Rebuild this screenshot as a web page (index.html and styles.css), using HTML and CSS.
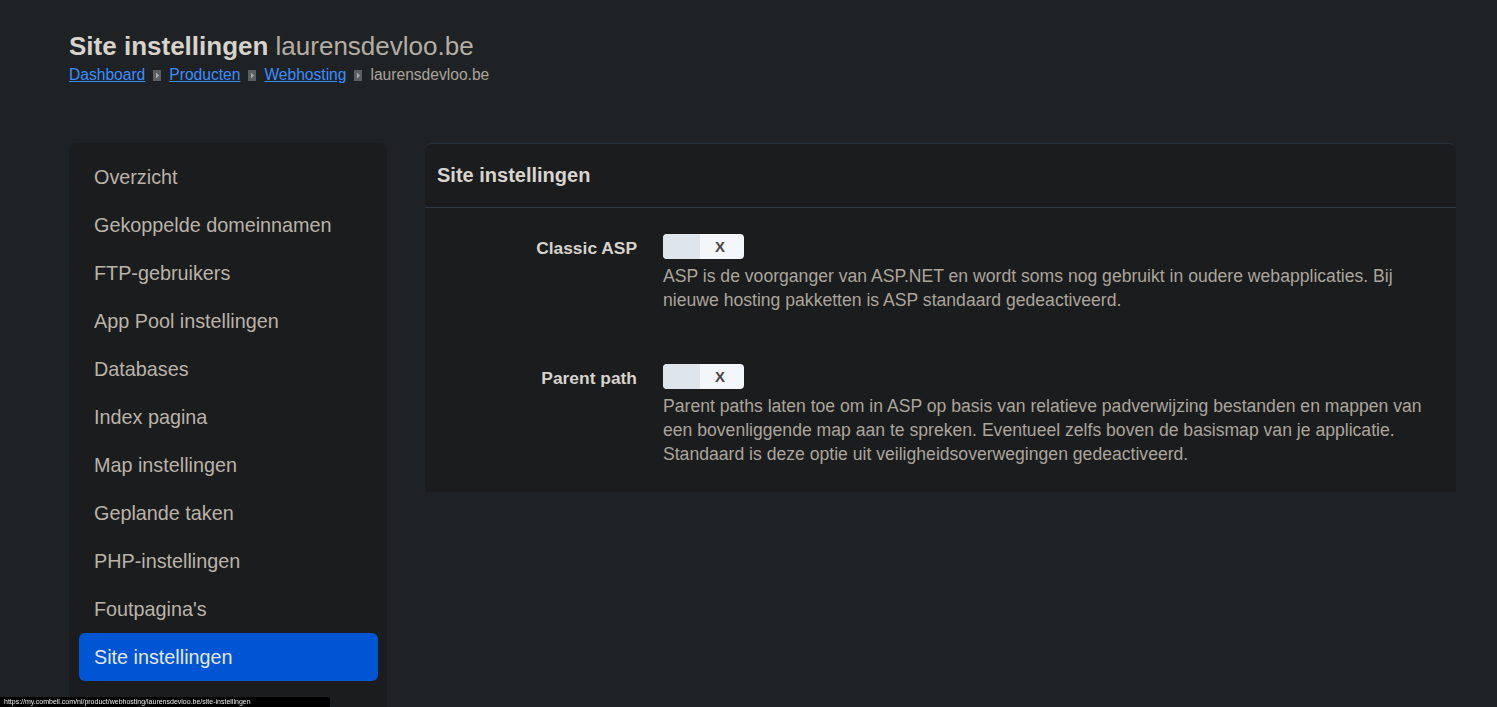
FILE: index.html
```html
<!DOCTYPE html>
<html lang="nl">
<head>
<meta charset="utf-8">
<title>Site instellingen</title>
<link rel="stylesheet" href="styles.css">
</head>
<body>
<div class="page">
  <header class="page-header">
    <h1 class="title">Site instellingen <span class="title-domain">laurensdevloo.be</span></h1>
    <nav class="crumbs">
      <a href="#">Dashboard</a>
      <svg class="sep" width="8" height="11" viewBox="0 0 8 11"><rect width="8" height="11" fill="#5c5f62"/><path d="M3 2.5 L6 5.5 L3 8.5 Z" fill="#a9acaf"/></svg>
      <a href="#">Producten</a>
      <svg class="sep" width="8" height="11" viewBox="0 0 8 11"><rect width="8" height="11" fill="#5c5f62"/><path d="M3 2.5 L6 5.5 L3 8.5 Z" fill="#a9acaf"/></svg>
      <a href="#">Webhosting</a>
      <svg class="sep" width="8" height="11" viewBox="0 0 8 11"><rect width="8" height="11" fill="#5c5f62"/><path d="M3 2.5 L6 5.5 L3 8.5 Z" fill="#a9acaf"/></svg>
      <span class="crumb-current">laurensdevloo.be</span>
    </nav>
  </header>

  <div class="layout">
    <aside class="sidebar">
      <a class="nav-item" href="#">Overzicht</a>
      <a class="nav-item" href="#">Gekoppelde domeinnamen</a>
      <a class="nav-item" href="#">FTP-gebruikers</a>
      <a class="nav-item" href="#">App Pool instellingen</a>
      <a class="nav-item" href="#">Databases</a>
      <a class="nav-item" href="#">Index pagina</a>
      <a class="nav-item" href="#">Map instellingen</a>
      <a class="nav-item" href="#">Geplande taken</a>
      <a class="nav-item" href="#">PHP-instellingen</a>
      <a class="nav-item" href="#">Foutpagina's</a>
      <a class="nav-item active" href="#">Site instellingen</a>
    </aside>

    <section class="card">
      <div class="card-header">Site instellingen</div>
      <div class="card-body">
        <div class="setting">
          <div class="setting-label">Classic ASP</div>
          <div class="setting-control">
            <div class="toggle"><span class="toggle-knob"></span><span class="toggle-x">X</span></div>
            <p class="setting-desc">ASP is de voorganger van ASP.NET en wordt soms nog gebruikt in oudere webapplicaties. Bij nieuwe hosting pakketten is ASP standaard gedeactiveerd.</p>
          </div>
        </div>
        <div class="setting">
          <div class="setting-label">Parent path</div>
          <div class="setting-control">
            <div class="toggle"><span class="toggle-knob"></span><span class="toggle-x">X</span></div>
            <p class="setting-desc">Parent paths laten toe om in ASP op basis van relatieve padverwijzing bestanden en mappen van een bovenliggende map aan te spreken. Eventueel zelfs boven de basismap van je applicatie. Standaard is deze optie uit veiligheidsoverwegingen gedeactiveerd.</p>
          </div>
        </div>
      </div>
    </section>
  </div>
</div>
<div class="statusbar"><span>https://my.combell.com/nl/product/webhosting/laurensdevloo.be/site-instellingen</span></div>
</body>
</html>
```

FILE: styles.css
```css
* { box-sizing: border-box; }
html, body { margin: 0; padding: 0; }
body {
  background: #1f2224;
  font-family: "Liberation Sans", Arial, sans-serif;
  color: #b9b3a9;
  height: 707px;
  overflow: hidden;
}
.page {
  padding: 29px 41px 0 69px;
}
.page-header { height: 114px; }
.title {
  margin: 0;
  font-size: 26px;
  line-height: 34px;
  font-weight: bold;
  color: #d6d2cc;
}
.title-domain { font-weight: normal; color: #b4aea5; }
.crumbs {
  display: flex;
  align-items: center;
  gap: 7px;
  font-size: 15.6px;
  line-height: 22px;
  margin-top: 1px;
}
.crumbs a { color: #3a8eff; text-decoration: underline; }
.crumbs .sep { margin: 0 1px; }
.crumb-current { color: #aaa49b; }

.layout {
  display: flex;
  gap: 38px;
  align-items: flex-start;
}
.sidebar {
  width: 318px;
  flex: none;
  background: #1b1c1e;
  border-radius: 7px;
  padding: 10px 9px 60px 10px;
  display: flex;
  flex-direction: column;
}
.nav-item {
  display: block;
  height: 48px;
  line-height: 48px;
  padding-left: 15px;
  font-size: 19.8px;
  color: #bab3a8;
  text-decoration: none;
  border-radius: 6px;
}
.nav-item.active {
  background: #0055d2;
  color: #e3e7ee;
}
.card {
  flex: 1;
  background: #1b1c1e;
  border-top: 1px solid #26313b;
  border-radius: 7px 7px 0 0;
}
.card-header {
  height: 64px;
  line-height: 63px;
  padding-left: 12px;
  font-size: 20px;
  font-weight: bold;
  color: #d8d4ce;
  border-bottom: 1px solid #2b3844;
}
.card-body {
  padding: 26px 0 26px;
  display: flex;
  flex-direction: column;
  gap: 52px;
}
.setting { display: flex; }
.setting-label {
  width: 212px;
  flex: none;
  text-align: right;
  font-size: 17.4px;
  font-weight: bold;
  color: #d6d2cc;
  padding-top: 4px;
}
.setting-control { padding-left: 26px; padding-right: 30px; }
.toggle {
  width: 81px;
  height: 25px;
  border-radius: 4px;
  background: #f3f6fa;
  display: flex;
  align-items: center;
  overflow: hidden;
}
.toggle-knob {
  width: 37px;
  height: 25px;
  background: #dfe5ec;
  border-radius: 4px 0 0 4px;
}
.toggle-x {
  flex: 1;
  text-align: center;
  font-size: 15px;
  font-weight: bold;
  color: #4a4744;
  padding-right: 4px;
}
.setting-desc {
  margin: 5px 0 0;
  font-size: 17.6px;
  line-height: 24px;
  color: #aba59b;
}
.statusbar {
  position: fixed;
  left: 0;
  bottom: 0;
  width: 330px;
  height: 10px;
  background: #000;
  border-radius: 0 4px 0 0;
  overflow: hidden;
  font-size: 7px;
  line-height: 10px;
  color: #e8e8e8;
}
.statusbar span { display: block; padding: 0 0 0 4px; white-space: nowrap; }
```
